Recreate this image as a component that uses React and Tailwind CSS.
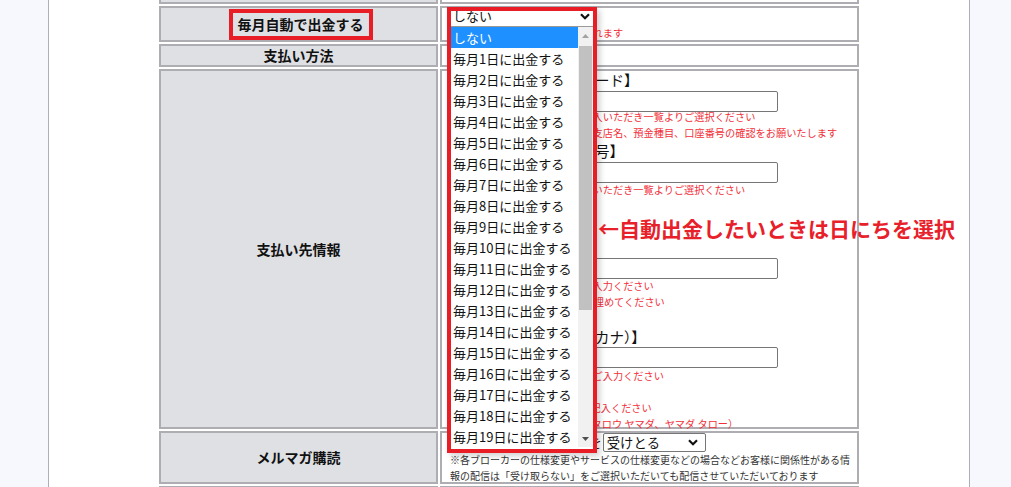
import React from 'react';

// 出金設定フォーム（毎月自動出金のプルダウンを開いた状態）
const options = ['しない', ...Array.from({ length: 19 }, (_, i) => `毎月${i + 1}日に出金する`)];

function Chevron() {
  return (
    <svg width="10" height="7" viewBox="0 0 10 7" fill="none">
      <path d="M1 1.2 5 5.2 9 1.2" stroke="#111" strokeWidth="2.2" />
    </svg>
  );
}

function Label({ children }) {
  return (
    <div className="flex items-center justify-center border-2 border-[#adadb2] bg-[#dfe0e4] text-[14px] font-bold text-[#111]">
      {children}
    </div>
  );
}

function Cell({ children, className = '' }) {
  return <div className={`relative border-2 border-[#adadb2] bg-white px-[8px] ${className}`}>{children}</div>;
}

function Note({ children, className = '' }) {
  return <p className={`whitespace-nowrap text-[10.2px] leading-[16px] text-[#f2303a] ${className}`}>{children}</p>;
}

function Heading({ children, className = '' }) {
  return <p className={`whitespace-nowrap text-[14.5px] leading-[18px] text-[#111] ${className}`}>{children}</p>;
}

function TextInput({ className = '' }) {
  return (
    <input
      type="text"
      readOnly
      className={`block h-[21px] w-[328px] rounded-[2px] border border-[#767676] bg-white ${className}`}
    />
  );
}

function OpenSelect() {
  return (
    <div className="absolute left-[5px] top-[-1px] z-20 h-[446px] w-[150px] border-4 border-[#e91d25] bg-white shadow-[3px_3px_6px_rgba(0,0,0,0.18)]">
      <div className="h-[16px] overflow-hidden border-b border-[#9a9a9a]">
        <div className="-mt-[3px] flex h-[16px] items-center justify-between pl-[2px] pr-[3px] text-[13px] leading-[16px]">
          <span>しない</span>
          <Chevron />
        </div>
      </div>
      <div className="flex h-[420px]">
        <div className="flex-1">
          {options.map((o, i) => (
            <div
              key={o}
              className={`h-[21px] whitespace-nowrap pl-[2px] text-[13px] leading-[21px] ${
                i === 0 ? 'bg-[#1e90ff] text-white' : 'text-[#111]'
              }`}
            >
              {o}
            </div>
          ))}
        </div>
        <div className="flex w-[15px] flex-col bg-[#f1f1f1]">
          <div className="flex h-[17px] items-center justify-center">
            <svg width="7" height="4" viewBox="0 0 7 4">
              <path d="M0 4 3.5 0 7 4Z" fill="#a3a3a3" />
            </svg>
          </div>
          <div className="mx-[1px] mt-[2px] h-[264px] bg-[#c1c1c1]" />
          <div className="flex-1" />
          <div className="flex h-[17px] items-center justify-center">
            <svg width="7" height="4" viewBox="0 0 7 4">
              <path d="M0 0 3.5 4 7 0Z" fill="#505050" />
            </svg>
          </div>
        </div>
      </div>
    </div>
  );
}

export default function App() {
  return (
    <div className="relative h-[487px] w-[1011px] overflow-hidden bg-[#f7f8fd] font-['Noto_Sans_CJK_JP','Noto_Sans',sans-serif] text-[#111]">
      <div className="ml-[48px] flex h-full w-[922px] flex-col items-start border-x border-[#aeaeb6] bg-white">
        <div className="-mt-[16px] ml-[110px] grid w-[700px] grid-cols-[279px_419px] grid-rows-[20px_36px_23px_360px_53px_30px] gap-[2px]">
          {/* 前の行（見切れ） */}
          <Label />
          <Cell />

          <Label>
            <span className="ml-[4px] h-[31px] border-4 border-[#e91d25] px-[5px] leading-[23px]">毎月自動で出金する</span>
          </Label>
          <Cell>
            <div className="h-[20px] w-[141px]" />
            <Note className="-mt-[3px] leading-[12px]">※毎月の指定日に自動で出金されます</Note>
            <OpenSelect />
          </Cell>

          <Label>支払い方法</Label>
          <Cell />

          <Label>支払い先情報</Label>
          <Cell>
            <Heading>【振込先の金融機関コード】</Heading>
            <TextInput className="mt-[2px]" />
            <Note className="-mt-[3px]">※金融機関名称の一部分をご記入いただき一覧よりご選択ください</Note>
            <Note>※ご登録前に必ず金融機関名、支店名、預金種目、口座番号の確認をお願いたします</Note>
            <Heading className="mt-[1px]">【取扱金融機関支店番号】</Heading>
            <TextInput className="mt-[2px]" />
            <Note className="-mt-[1px]">※支店名の一部分などをご記入いただき一覧よりご選択ください</Note>
            <Heading className="mt-[40px]">【口座番号】</Heading>
            <TextInput className="mt-[2px]" />
            <Note className="-mt-[1px] leading-[15px]">※口座番号を必ず半角数字でご入力ください</Note>
            <Note className="leading-[15px]">※番号が7桁未満の場合は、0で埋めてください</Note>
            <Heading className="mt-[18px]">【振込先口座名義人（カナ）】</Heading>
            <TextInput className="mt-[1px]" />
            <Note className="leading-[14.5px]">※口座名義人を全角カタカナでご入力ください</Note>
            <Note className="leading-[14.5px]">※姓と名の間には</Note>
            <Note className="leading-[14.5px]">全角スペースを一つ入れて、ご記入ください</Note>
            <Note className="leading-[14.5px]">（例： ヤマダタロウ → ヤマダ タロウ ヤマダ、ヤマダ タロー）</Note>
          </Cell>

          <Label>メルマガ購読</Label>
          <Cell>
            <div className="flex h-[19px] items-center">
              <span className="whitespace-nowrap text-[13.8px] leading-[19px]">メールマガジンの配信を</span>
              <div className="ml-[1px] flex h-[19px] w-[103px] items-center justify-between rounded-[2px] border border-[#767676] bg-white pl-[3px] pr-[7px] text-[13.33px] leading-[17px]">
                <span>受けとる</span>
                <Chevron />
              </div>
            </div>
            <p className="whitespace-nowrap text-[10px] leading-[16px] text-[#333]">
              ※各ブローカーの仕様変更やサービスの仕様変更などの場合などお客様に関係性がある情
            </p>
            <p className="whitespace-nowrap text-[10px] leading-[16px] text-[#333]">
              報の配信は「受け取らない」をご選択いただいても配信させていただいております
            </p>
          </Cell>

          {/* 次の行（見切れ） */}
          <Label />
          <Cell />
        </div>
      </div>

      <p className="absolute left-[598px] top-[217px] z-30 whitespace-nowrap text-[21px] font-bold leading-[22px] text-[#e8202a]">
        ←自動出金したいときは日にちを選択
      </p>
    </div>
  );
}
